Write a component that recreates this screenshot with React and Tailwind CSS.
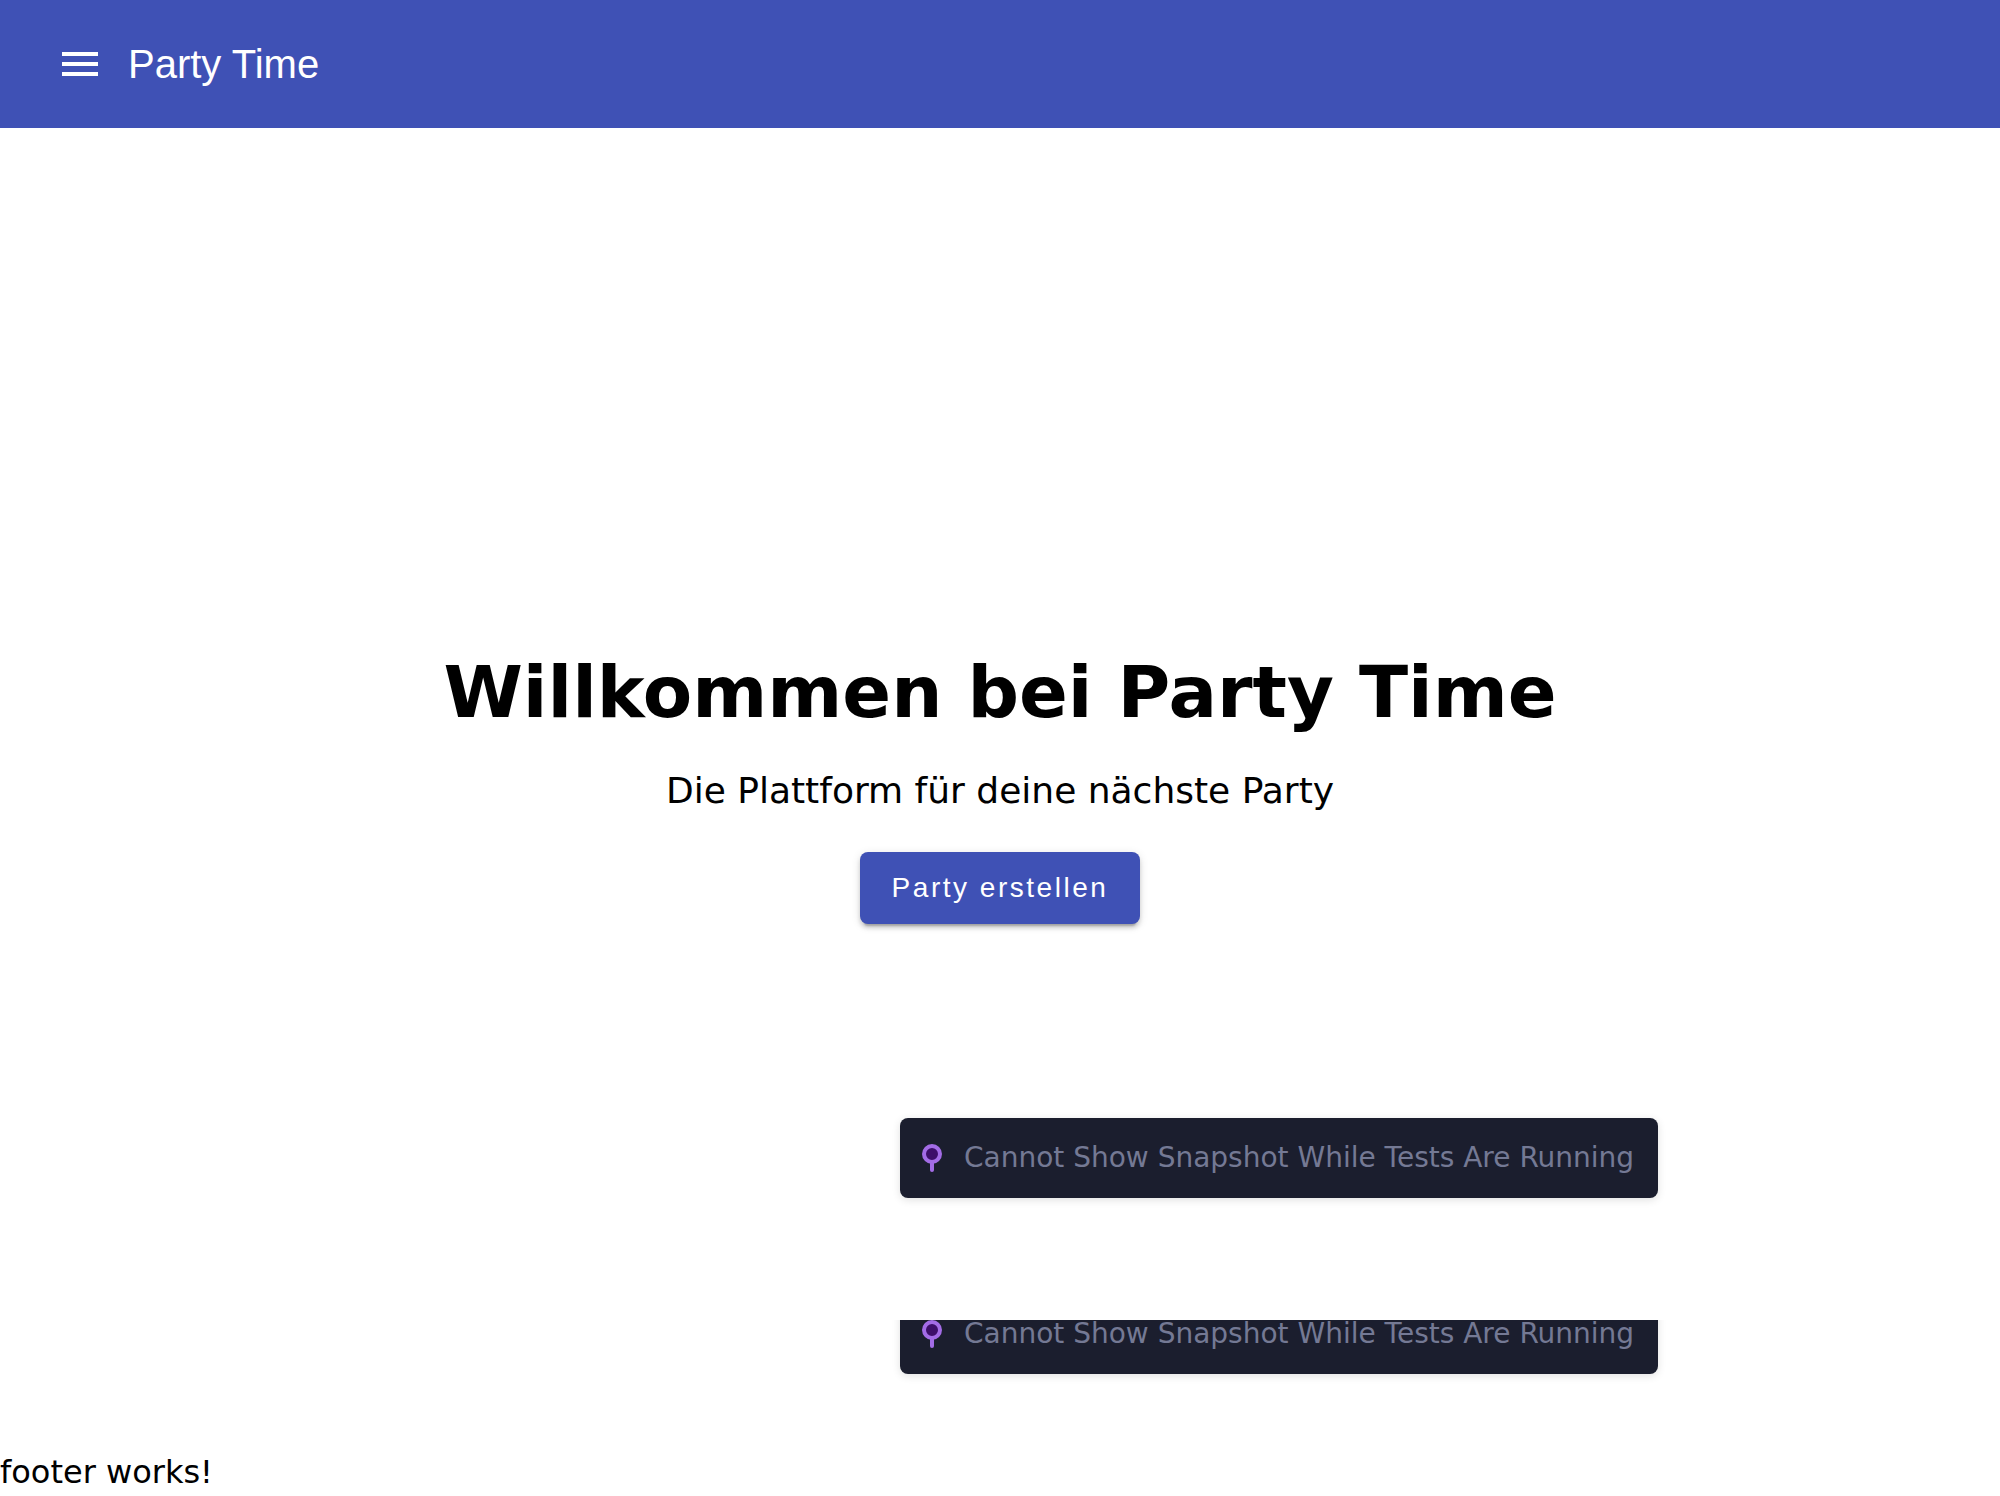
function MenuIcon() {
  return (
    <svg viewBox="0 0 24 24" className="size-12" fill="currentColor" aria-hidden="true">
      <path d="M3 18h18v-2H3v2zm0-5h18v-2H3v2zm0-7v2h18V6H3z" />
    </svg>
  );
}

function PinIcon() {
  return (
    <svg viewBox="0 0 16 16" className="size-8 shrink-0" aria-hidden="true">
      <path d="M8 10v4" stroke="#a36ce6" strokeWidth="2" strokeLinecap="round" />
      <circle cx="8" cy="6" r="4" fill="#3d0f69" stroke="#a36ce6" strokeWidth="2" />
    </svg>
  );
}

function SnapshotNotice({ clipped = false }) {
  return (
    <div
      role="status"
      className={
        "flex h-20 items-center gap-4 rounded-lg bg-[#1b1e2e] pl-4 pr-6 text-[28px] leading-8 whitespace-nowrap text-[#747994] shadow-[0_2px_8px_rgba(0,0,0,0.12)] " +
        (clipped ? "[clip-path:inset(26px_-16px_-16px_-16px)]" : "")
      }
    >
      <PinIcon />
      <span>Cannot Show Snapshot While Tests Are Running</span>
    </div>
  );
}

export default function App() {
  return (
    <div className="flex min-h-screen flex-col bg-white font-['DejaVu_Sans',sans-serif] text-black">
      <header className="flex h-32 items-center bg-[#3f51b5] px-8 font-['Liberation_Sans',sans-serif] text-white">
        <button type="button" aria-label="Menü" className="grid size-24 place-items-center">
          <MenuIcon />
        </button>
        <span className="text-[40px] leading-[45px]">Party Time</span>
      </header>

      <main className="relative flex flex-1 flex-col items-center justify-center">
        <h1 className="text-7xl leading-[84px] font-bold">Willkommen bei Party Time</h1>
        <p className="mt-9 text-4xl leading-[42px]">Die Plattform für deine nächste Party</p>
        <button
          type="button"
          className="mt-10 h-18 rounded-lg bg-[#3f51b5] px-8 font-['Liberation_Sans',sans-serif] text-[28px] tracking-[0.09em] text-white shadow-[0_6px_2px_-4px_rgba(0,0,0,0.2),0_4px_4px_rgba(0,0,0,0.14),0_2px_10px_rgba(0,0,0,0.12)]"
        >
          Party erstellen
        </button>

        <div className="absolute bottom-18 left-[45%] flex flex-col gap-24">
          <SnapshotNotice />
          <SnapshotNotice clipped />
        </div>
      </main>

      <footer className="h-[50px] pt-2 text-[32px] leading-9">
        <p>footer works!</p>
      </footer>
    </div>
  );
}
